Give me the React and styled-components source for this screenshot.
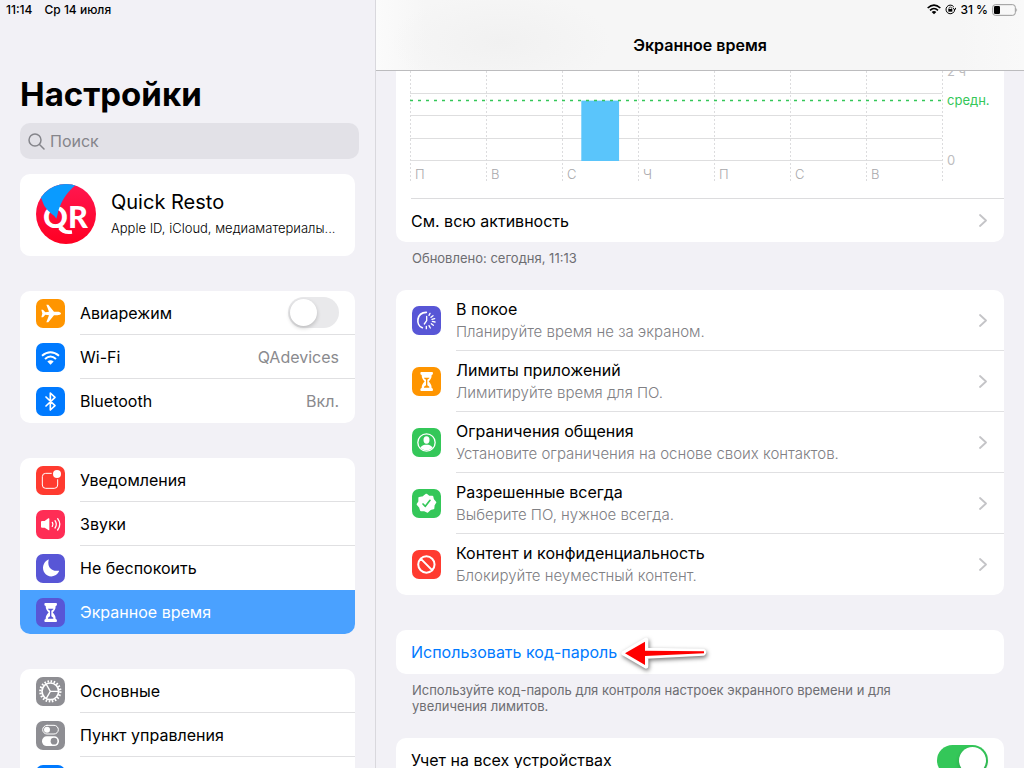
import { useState } from "react";
import { createGlobalStyle, styled } from "styled-components";

const GlobalStyle = createGlobalStyle`
  * {
    box-sizing: border-box;
  }

  body {
    margin: 0;
    background-color: #f2f1f6;
    color: #000;
    font-family: Inter, "Liberation Sans", sans-serif;
    font-size: 16px;
  }

  h1,
  h2,
  p {
    margin: 0;
  }

  button,
  input {
    font: inherit;
  }
`;

const Page = styled.div`
  display: flex;
  height: 100vh;
  overflow: hidden;
`;

const Sidebar = styled.aside`
  flex: 0 0 376px;
  border-right: 1px solid #d9d8dd;
`;

const StatusBar = styled.div`
  height: 19px;
  padding: 0 6px;
  display: flex;
  align-items: center;
  justify-content: ${(props) => (props.$end ? "flex-end" : "flex-start")};
  gap: ${(props) => (props.$end ? "4px" : "12px")};
  font-size: 12px;
  font-weight: 500;
`;

const SidebarHeader = styled.div`
  padding: 53px 16px 0 20px;
`;

const Title = styled.h1`
  font-size: 33px;
  line-height: 44px;
  font-weight: 700;
`;

const Search = styled.label`
  margin-top: 7px;
  height: 36px;
  padding: 0 8px;
  display: flex;
  align-items: center;
  gap: 5px;
  border-radius: 10px;
  background-color: #e2e1e7;
  color: #85858b;
`;

const SearchInput = styled.input`
  flex: 1;
  min-width: 0;
  padding: 0;
  border: 0;
  outline: 0;
  background: none;

  &::placeholder {
    color: #85858b;
  }
`;

const SidebarBody = styled.nav`
  padding: 15px 20px 0;
  display: flex;
  flex-direction: column;
  gap: 35px;
`;

const Card = styled.div`
  border-radius: ${(props) => (props.$flatTop ? "0 0 10px 10px" : "10px")};
  background-color: #fff;
  overflow: ${(props) => (props.$overlay ? "visible" : "hidden")};
`;

const Profile = styled.a`
  height: 82px;
  padding: 10px 16px 12px;
  display: flex;
  align-items: center;
  gap: 15px;
  color: inherit;
  text-decoration: none;
`;

const ProfileText = styled.div`
  min-width: 0;
`;

const ProfileName = styled.p`
  font-size: 20px;
  line-height: 28px;
`;

const ProfileNote = styled.p`
  font-size: 13px;
  line-height: 24px;
  font-weight: 300;
  white-space: nowrap;
`;

const Row = styled.a`
  display: flex;
  padding-left: 16px;
  color: ${(props) => (props.$active ? "#fff" : "inherit")};
  background-color: ${(props) => (props.$active ? "#4aa1ff" : "transparent")};
  text-decoration: none;
`;

const RowIcon = styled.span`
  width: 44px;
  display: flex;
  align-items: center;
`;

const RowBody = styled.span`
  flex: 1;
  min-width: 0;
  min-height: ${(props) => (props.$tall ? "61px" : "44px")};
  padding-right: 16px;
  display: flex;
  align-items: center;
  justify-content: space-between;
  border-bottom: 1px solid ${(props) => (props.$last ? "transparent" : "#e0e0e2")};
`;

const Value = styled.span`
  color: #8a8a8e;
`;

const Label = styled.span`
  display: block;
  line-height: 24px;
`;

const Description = styled.span`
  display: block;
  color: #808084;
  font-size: 15px;
  line-height: 22px;
  font-weight: 300;
`;

const Tile = styled.svg`
  width: 29px;
  height: 29px;
  border-radius: 7px;
  background-color: ${(props) => props.$color};
  color: ${(props) => props.$color};
  flex: none;
`;

const Switch = styled.input`
  appearance: none;
  width: 51px;
  height: 31px;
  margin: 0;
  padding: 2px;
  border-radius: 16px;
  background-color: #e9e9eb;
  display: flex;
  justify-content: flex-start;

  &::before {
    content: "";
    width: 27px;
    height: 27px;
    border-radius: 50%;
    background-color: #fff;
    box-shadow: 0 2px 4px #00000033;
  }

  &:checked {
    background-color: #34c759;
    justify-content: flex-end;
  }
`;

const Main = styled.main`
  flex: 1;
  min-width: 0;
`;

const MainHeader = styled.header`
  height: 71px;
  border-bottom: 1px solid #bcbcbe;
  background: radial-gradient(ellipse 110px 50px at 125px 42px, #f1f1f1, transparent),
    linear-gradient(90deg, #fbfbfb, #f6f6f6 50px, #f6f6f6 90%, #f9f9f9);
`;

const MainTitle = styled.h2`
  font-size: 16px;
  line-height: 52px;
  font-weight: 600;
  text-align: center;
`;

const Content = styled.div`
  padding: 0 20px;
`;

const ChartArea = styled.div`
  height: 127px;
  padding: 0 62px 0 14px;
  overflow: hidden;
`;

const Chart = styled.svg`
  display: block;
  width: 100%;
  height: 127px;
  overflow: visible;
`;

const PlainRow = styled.a`
  height: 44px;
  margin-left: 15px;
  padding-right: 16px;
  display: flex;
  align-items: center;
  justify-content: space-between;
  border-top: ${(props) => (props.$divided ? "1px solid #dcdcde" : "0")};
  color: inherit;
  text-decoration: none;
`;

const Footnote = styled.p`
  max-width: 536px;
  padding: 8px 16px 24px;
  color: #6d6d72;
  font-size: 13px;
  line-height: 16px;
`;

const Gap = styled.div`
  height: 35px;
`;

const LinkButton = styled.button`
  position: relative;
  height: 44px;
  padding: 0;
  margin-left: 15px;
  border: 0;
  background: none;
  color: #007aff;
  display: block;
`;

const Arrow = styled.svg`
  position: absolute;
  left: calc(100% + 2px);
  top: 5px;
  width: 93px;
  height: 37px;
  overflow: visible;
  filter: drop-shadow(1px 2px 2px #00000088);
`;

const stroke = {
  fill: "none",
  stroke: "#fff",
  strokeLinecap: "round",
  strokeLinejoin: "round",
};

const Hourglass = () => (
  <>
    <path
      fill="#fff"
      d="M28 15H60Q63 15 63 19Q63 24 59 24C59 34 55 38 50 43.500C55 49 59 53 59 63Q63 63 63 68Q63 72 60 72H28Q25 72 25 68Q25 63 29 63C29 53 33 49 38 43.500C33 38 29 34 29 24Q25 24 25 19Q25 15 28 15Z"
    />
    <path fill="currentColor" d="M36 32H52V34L46 38V55L52 59V62H36V59L42 55V38L36 34Z" />
  </>
);

const icons = {
  plane: (
    <path
      fill="#fff"
      d="M75 43.500C75 47 69 48.500 64 48.500H54L37 70H31L39 48.500L28 47.500L21 55H16L19 43.500L16 32H21L28 39.500L39 38.500L31 17H37L54 38.500H64C69 38.500 75 40 75 43.500Z"
    />
  ),
  wifi: (
    <>
      <path {...stroke} strokeLinecap="butt" strokeWidth="6" d="M18 38Q43.500 17 69 38M27 48Q43.500 33 60 48" />
      <path fill="#fff" d="M34 55.500Q43.500 48 53 55.500L43.500 65Z" />
    </>
  ),
  bluetooth: <path {...stroke} strokeWidth="5" d="M30 30L57 56L43 69V18L57 31L30 57" />,
  notifications: (
    <>
      <path {...stroke} strokeWidth="3" d="M46 22H29Q19 22 19 32V57Q19 67 29 67H55Q65 67 65 57V41" />
      <circle cx="63" cy="24" r="12" fill="#fff" />
    </>
  ),
  sound: (
    <>
      <path fill="#fff" d="M18 33H26L37 25Q40 24 40 27V59Q40 62 37 60L26 53H18Q15 53 15 50V36Q15 33 18 33Z" />
      <path {...stroke} strokeWidth="4" d="M49 37Q53 43 49 49M57 32Q65 43 57 54M65 26Q78 43 65 60" />
    </>
  ),
  moon: <path fill="#fff" d="M38 17C33 39 46 53 68 50C70 50 69 52 68 54C58 71 36 71 26 57C16 42 22 24 36 17C37 16 38 16 38 17Z" />,
  hourglass: <Hourglass />,
  gear: (
    <>
      <circle cx="43" cy="43" r="25" fill="none" stroke="#fff" strokeWidth="5" />
      <circle cx="43" cy="43" r="30" fill="none" stroke="#fff" strokeWidth="7" pathLength="80" strokeDasharray="2 2" />
      <path {...stroke} strokeWidth="4" d="M43 43H67M43 43L31 22M43 43L31 64" />
    </>
  ),
  toggles: (
    <>
      <rect x="20" y="13" width="47" height="26" rx="13" {...stroke} strokeWidth="3" />
      <circle cx="33" cy="26" r="9" fill="#fff" />
      <rect x="18" y="46" width="51" height="29" rx="14" fill="#fff" />
      <circle cx="54" cy="60.500" r="10" fill="currentColor" />
    </>
  ),
  downtime: (
    <>
      <path {...stroke} strokeWidth="5" d="M43 19C12 20 11 58 31 65" />
      <path {...stroke} strokeWidth="4" d="M44 31V44L37 54" />
      <path
        {...stroke}
        strokeWidth="4"
        d="M54 22L51 28M63 29L57 34M68 38L60 40M69 48L61 46M64 58L58 53M55 66L51 59M43 68V61"
      />
    </>
  ),
  person: (
    <>
      <circle cx="43.500" cy="43.500" r="26" fill="none" stroke="#fff" strokeWidth="4" />
      <ellipse cx="43.500" cy="36" rx="9" ry="11" fill="#fff" />
      <path fill="#fff" d="M25 59C29 51 37 50 43.500 50C50 50 58 51 62 59C56 65 50 67 43.500 67C37 67 31 65 25 59Z" />
    </>
  ),
  badge: (
    <>
      <path
        fill="#fff"
        stroke="#fff"
        strokeWidth="6"
        strokeLinejoin="round"
        d="M43.500 17L51 23L61 23L63 32L70 40L65 48L64 58L55 60L46 68L38 64L27 64L24 54L17 46L22 38L22 27L33 25Z"
      />
      <path fill="none" stroke="currentColor" strokeWidth="5" strokeLinecap="round" strokeLinejoin="round" d="M33 45L40 52L54 34" />
    </>
  ),
  forbidden: <path {...stroke} strokeWidth="6" d="M26 26A24.500 24.500 0 1 1 26 61A24.500 24.500 0 0 1 26 26L61 61" />,
  blank: null,
};

const Icon = ({ name, color }) => (
  <Tile viewBox="0 0 87 87" $color={color} aria-hidden="true">
    {icons[name]}
  </Tile>
);

const Chevron = () => (
  <svg width="9" height="13" viewBox="0 0 9 13" aria-hidden="true">
    <path d="M1 1L7 6.500L1 12" fill="none" stroke="#c4c4c7" strokeWidth="1.800" strokeLinecap="round" strokeLinejoin="round" />
  </svg>
);

const LogoImage = styled.svg`
  width: 60px;
  height: 60px;
  flex: none;
`;

const Logo = () => (
  <LogoImage viewBox="0 0 180 180" aria-hidden="true">
    <defs>
      <clipPath id="logo">
        <circle cx="90" cy="90" r="90" />
      </clipPath>
      <linearGradient id="red" x2="0" y2="1">
        <stop offset="0" stopColor="#ff1750" />
        <stop offset="1" stopColor="#ff0022" />
      </linearGradient>
    </defs>
    <g clipPath="url(#logo)">
      <rect width="180" height="180" fill="url(#red)" />
      <text x="21" y="132" fill="#fff" fontFamily="Lato, sans-serif" fontWeight="900" fontSize="92">
        QR
      </text>
      <path d="M10 30C20 50 20 58 28 70C38 86 54 92 61 104C66 92 65 82 72 67C82 43 97 20 119 4L100 -5H30Z" fill="#0a9bff" />
      <path d="M72 132C78 142 92 146 108 144" fill="none" stroke="#fff" strokeWidth="11" />
    </g>
  </LogoImage>
);

const days = ["П", "В", "С", "Ч", "П", "С", "В"];
const lines = [22, 44, 67, 89];

const ActivityChart = () => (
  <ChartArea>
    <Chart role="img" aria-label="Экранное время">
      {lines.map((y) => (
        <rect key={y} y={y} width="100%" height="1" fill="#dededf" />
      ))}
      {[...days, ""].map((day, i) => (
        <g key={i}>
          <line
            x1={`${(i * 100) / 7}%`}
            x2={`${(i * 100) / 7}%`}
            y1="0"
            y2="111"
            transform="translate(.5 0)"
            stroke="#dcdcde"
            strokeDasharray="2 2"
          />
          <text x={`${(i * 100) / 7}%`} y="108" dx="5" fontSize="13" fontWeight="300" fill="#a8a8ab">
            {day}
          </text>
        </g>
      ))}
      <rect x="32.2%" y="30" width="7.1%" height="60" fill="#5ac5fb" />
      <rect x="32.2%" y="29" width="7.1%" height="1" fill="#5ac5fb" opacity=".4" />
      <line x1="0" x2="100%" y1="29.500" y2="29.500" stroke="#34c759" strokeWidth="1.500" strokeDasharray="3 5" />
      <text x="100%" y="5" dx="5" fontSize="13" fill="#bdbdc0">
        2 ч
      </text>
      <text x="100%" y="34" dx="5" fontSize="13" fill="#34c759">
        средн.
      </text>
      <text x="100%" y="94" dx="5" fontSize="13" fill="#bdbdc0">
        0
      </text>
    </Chart>
  </ChartArea>
);

const alerts = [
  { id: "notifications", name: "Уведомления", color: "#ff3b30", icon: "notifications" },
  { id: "sounds", name: "Звуки", color: "#ff2d55", icon: "sound" },
  { id: "dnd", name: "Не беспокоить", color: "#5856d6", icon: "moon" },
  { id: "screen-time", name: "Экранное время", color: "#5856d6", icon: "hourglass" },
];

const general = [
  { id: "general", name: "Основные", color: "#8e8e93", icon: "gear" },
  { id: "control", name: "Пункт управления", color: "#8e8e93", icon: "toggles" },
  { id: "display", name: "", color: "#007aff", icon: "blank" },
];

const options = [
  { id: "downtime", name: "В покое", text: "Планируйте время не за экраном.", color: "#5856d6", icon: "downtime" },
  { id: "limits", name: "Лимиты приложений", text: "Лимитируйте время для ПО.", color: "#ff9500", icon: "hourglass" },
  {
    id: "communication",
    name: "Ограничения общения",
    text: "Установите ограничения на основе своих контактов.",
    color: "#34c759",
    icon: "person",
  },
  { id: "allowed", name: "Разрешенные всегда", text: "Выберите ПО, нужное всегда.", color: "#34c759", icon: "badge" },
  {
    id: "content",
    name: "Контент и конфиденциальность",
    text: "Блокируйте неуместный контент.",
    color: "#ff3b30",
    icon: "forbidden",
  },
];

const SettingsGroup = ({ list, selected, onSelect }) => (
  <Card>
    {list.map((item, i) => (
      <Row key={item.id} href={`#${item.id}`} $active={item.id === selected} onClick={() => onSelect(item.id)}>
        <RowIcon>
          <Icon name={item.icon} color={item.color} />
        </RowIcon>
        <RowBody $last={i === list.length - 1 || list[i + 1].id === selected}>{item.name}</RowBody>
      </Row>
    ))}
  </Card>
);

const App = () => {
  const [selected, setSelected] = useState("screen-time");
  const [airplane, setAirplane] = useState(false);
  const [shared, setShared] = useState(true);

  return (
    <Page>
      <GlobalStyle />
      <Sidebar>
        <StatusBar>
          <span>11:14</span>
          <span>Ср 14 июля</span>
        </StatusBar>
        <SidebarHeader>
          <Title>Настройки</Title>
          <Search>
            <svg width="17" height="17" viewBox="0 0 17 17" aria-hidden="true">
              <path
                d="M11.500 11.500L16 16M13 7A6 6 0 1 1 1 7A6 6 0 0 1 13 7"
                fill="none"
                stroke="currentColor"
                strokeWidth="1.500"
                strokeLinecap="round"
              />
            </svg>
            <SearchInput type="search" placeholder="Поиск" aria-label="Поиск" />
          </Search>
        </SidebarHeader>
        <SidebarBody>
          <Card>
            <Profile href="#profile">
              <Logo />
              <ProfileText>
                <ProfileName>Quick Resto</ProfileName>
                <ProfileNote>Apple ID, iCloud, медиаматериалы...</ProfileNote>
              </ProfileText>
            </Profile>
          </Card>
          <Card>
            <Row as="label">
              <RowIcon>
                <Icon name="plane" color="#ff9500" />
              </RowIcon>
              <RowBody>
                Авиарежим
                <Switch type="checkbox" checked={airplane} onChange={() => setAirplane(!airplane)} />
              </RowBody>
            </Row>
            <Row href="#wifi">
              <RowIcon>
                <Icon name="wifi" color="#007aff" />
              </RowIcon>
              <RowBody>
                Wi-Fi
                <Value>QAdevices</Value>
              </RowBody>
            </Row>
            <Row href="#bluetooth">
              <RowIcon>
                <Icon name="bluetooth" color="#007aff" />
              </RowIcon>
              <RowBody $last>
                Bluetooth
                <Value>Вкл.</Value>
              </RowBody>
            </Row>
          </Card>
          <SettingsGroup list={alerts} selected={selected} onSelect={setSelected} />
          <SettingsGroup list={general} selected={selected} onSelect={setSelected} />
        </SidebarBody>
      </Sidebar>
      <Main>
        <MainHeader>
          <StatusBar $end>
            <svg width="14" height="11" viewBox="0 0 42 33" aria-hidden="true">
              <path d="M2 12Q21 -5 40 12M9 19Q21 8 33 19" fill="none" stroke="#000" strokeWidth="5" />
              <path d="M14 24Q21 18 28 24L21 31Z" />
            </svg>
            <svg width="11" height="11" viewBox="0 0 33 33" aria-hidden="true">
              <path d="M26 8A13 13 0 1 0 29 17M24 11L29 18L33 11" fill="none" stroke="#000" strokeWidth="3" />
              <path d="M10 15H22V23H10Z" />
              <path d="M12 16V13Q12 9 16 9Q20 9 20 13V16" fill="none" stroke="#000" strokeWidth="2" />
            </svg>
            <span>31 %</span>
            <svg width="26" height="12" viewBox="0 0 78 36" aria-hidden="true">
              <rect x="2" y="2" width="68" height="32" rx="8" fill="none" stroke="#999" strokeWidth="3" />
              <rect x="6" y="6" width="18" height="24" rx="4" />
              <path d="M73 12Q78 18 73 24Z" fill="#999" />
            </svg>
          </StatusBar>
          <MainTitle>Экранное время</MainTitle>
        </MainHeader>
        <Content>
          <Card $flatTop>
            <ActivityChart />
            <PlainRow href="#activity" $divided>
              См. всю активность
              <Chevron />
            </PlainRow>
          </Card>
          <Footnote>Обновлено: сегодня, 11:13</Footnote>
          <Card>
            {options.map((item, i) => (
              <Row key={item.id} href={`#${item.id}`}>
                <RowIcon>
                  <Icon name={item.icon} color={item.color} />
                </RowIcon>
                <RowBody $tall $last={i === options.length - 1}>
                  <span>
                    <Label>{item.name}</Label>
                    <Description>{item.text}</Description>
                  </span>
                  <Chevron />
                </RowBody>
              </Row>
            ))}
          </Card>
          <Gap />
          <Card $overlay>
            <LinkButton type="button">
              Использовать код-пароль
              <Arrow viewBox="0 0 279 111" aria-hidden="true">
                <path
                  d="M14 55L81 15V45L253 48Q257 51 253 55L81 64V94Z"
                  fill="#f00"
                  stroke="#fff"
                  strokeWidth="14"
                  strokeLinejoin="round"
                />
                <path d="M18 55L78 20V47L255 49V55L78 63V90Z" fill="#f00" />
              </Arrow>
            </LinkButton>
          </Card>
          <Footnote>
            Используйте код-пароль для контроля настроек экранного времени и для увеличения лимитов.
          </Footnote>
          <Card>
            <PlainRow as="label">
              Учет на всех устройствах
              <Switch type="checkbox" checked={shared} onChange={() => setShared(!shared)} />
            </PlainRow>
          </Card>
        </Content>
      </Main>
    </Page>
  );
};

export default App;
